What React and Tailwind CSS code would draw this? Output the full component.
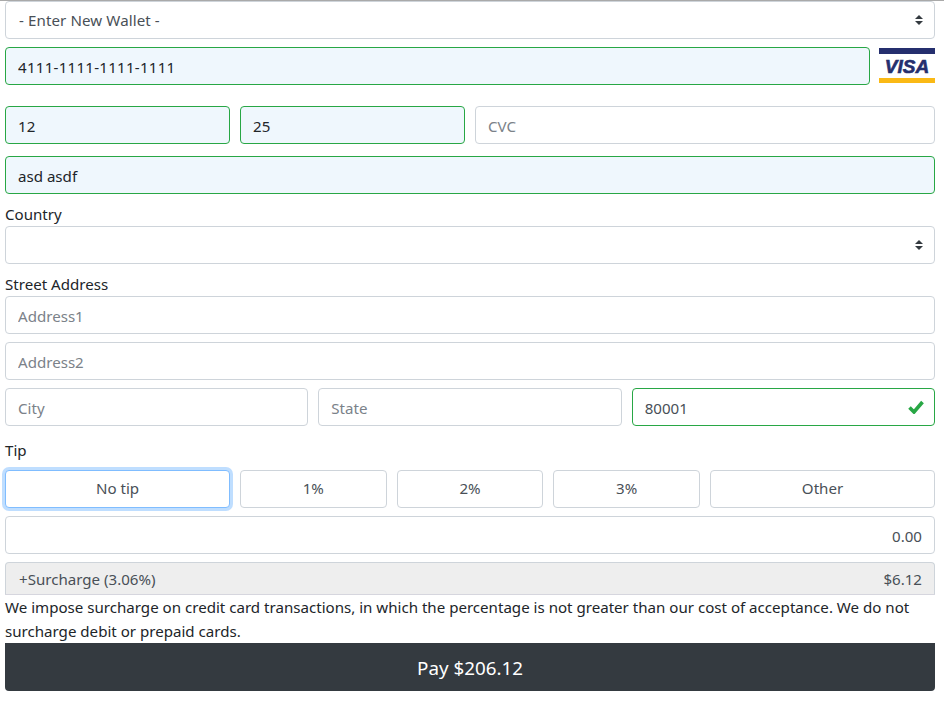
const inputBase =
	"block w-full h-[38px] px-3 pt-px rounded-[4px] border outline-none text-[15.1px] leading-6 placeholder:text-[#7b8289]";
const plain = `${inputBase} bg-white border-[#ced4da] text-[#495057]`;
const filled = `${inputBase} bg-[#eff7fd] border-[#28a745] text-[#212529]`;
const label = "h-6 mt-2 leading-6 text-[#212529]";

const SelectBox = ({ text }) => (
	<div className="relative">
		<select
			className="block w-full h-[38px] pl-[13px] pr-3 rounded-[4px] border border-[#ced4da] bg-white text-[#495057] text-[15.1px] tracking-[0.1px] outline-none appearance-none"
			defaultValue={text}
		>
			<option>{text}</option>
		</select>
		<svg className="absolute right-3 top-[14px]" width="8" height="10" viewBox="0 0 8 10">
			<path d="M4 0 L8 4 H0 Z M0 6 H8 L4 10 Z" fill="#343a40" />
		</svg>
	</div>
);

const VisaLogo = () => (
	<svg width="56" height="36" viewBox="0 0 56 36" className="shrink-0">
		<rect x="0" y="0" width="56" height="6" fill="#252f6e" />
		<rect x="0" y="30" width="56" height="5" fill="#fab915" />
		<text
			x="28"
			y="25"
			textAnchor="middle"
			fontFamily="Liberation Sans, sans-serif"
			fontSize="19"
			fontWeight="700"
			fontStyle="italic"
			fill="#252f6e"
			stroke="#252f6e"
			strokeWidth="0.6"
		>
			VISA
		</text>
	</svg>
);

const TipButton = ({ children, className = "" }) => (
	<button className={`h-[38px] pb-px rounded-[4px] border border-[#ced4da] bg-white text-[#495057] text-[15.1px] ${className}`}>
		{children}
	</button>
);

const App = () => {
	return (
		<div className="min-h-[705px] bg-white font-['Noto_Sans',sans-serif] text-[15.1px]">
			<div className="h-px bg-[#a9a9a9]" />
			<div className="px-[5px] w-[940px]">
				<SelectBox text="- Enter New Wallet -" />

				<div className="flex items-center mt-2 gap-[9px]">
					<input className={`${filled} flex-1 tracking-[0.25px]`} readOnly value="4111-1111-1111-1111" />
					<VisaLogo />
				</div>

				<div className="flex gap-[10px] mt-[21px]">
					<input className={`${filled} !w-[225px]`} readOnly value="12" />
					<input className={`${filled} !w-[225px]`} readOnly value="25" />
					<input className={`${plain} flex-1`} placeholder="CVC" />
				</div>

				<input className={`${filled} mt-3`} readOnly value="asd asdf" />

				<div className={label}>Country</div>
				<SelectBox text="" />

				<div className={label}>Street Address</div>
				<input className={plain} placeholder="Address1" />
				<input className={`${plain} mt-2`} placeholder="Address2" />

				<div className="grid grid-cols-3 gap-[10px] mt-2">
					<input className={plain} placeholder="City" />
					<input className={plain} placeholder="State" />
					<div className="relative">
						<input className={`${inputBase} bg-white border-[#28a745] text-[#495057]`} readOnly value="80001" />
						<svg className="absolute right-[11px] top-[12px]" width="16" height="14" viewBox="0 0 16 14">
							<path d="M1.5 7.5 L6 12 L14.5 2" fill="none" stroke="#28a745" strokeWidth="3.6" />
						</svg>
					</div>
				</div>

				<div className="h-6 mt-3 mb-2 leading-6 text-[#212529]">Tip</div>
				<div className="flex gap-[10px]">
					<TipButton className="w-[225px] !border-[#80bdff] shadow-[0_0_0_3px_rgba(0,123,255,0.25)]">No tip</TipButton>
					<TipButton className="flex-1">1%</TipButton>
					<TipButton className="flex-1">2%</TipButton>
					<TipButton className="flex-1">3%</TipButton>
					<TipButton className="w-[225px]">Other</TipButton>
				</div>

				<input className={`${plain} mt-2 text-right`} readOnly value="0.00" />

				<div className="flex justify-between items-center h-[32px] mt-2 pt-[2px] pl-[13px] pr-3 rounded-t-[4px] border border-b-0 border-[#ced4da] bg-[#eeeeee] text-[#495057]">
					<span>+Surcharge (3.06%)</span>
					<span>$6.12</span>
				</div>
				<div className="border-t border-[#d6d6de]" />

				<p className="leading-6 text-[#212529]">
					We impose surcharge on credit card transactions, in which the percentage is not greater than our cost of acceptance. We do not surcharge debit or prepaid cards.
				</p>

				<button className="block w-full h-12 pt-[2px] rounded-b-[4px] bg-[#343a40] text-white text-[18.8px]">Pay $206.12</button>
			</div>
		</div>
	);
};

export default App;
